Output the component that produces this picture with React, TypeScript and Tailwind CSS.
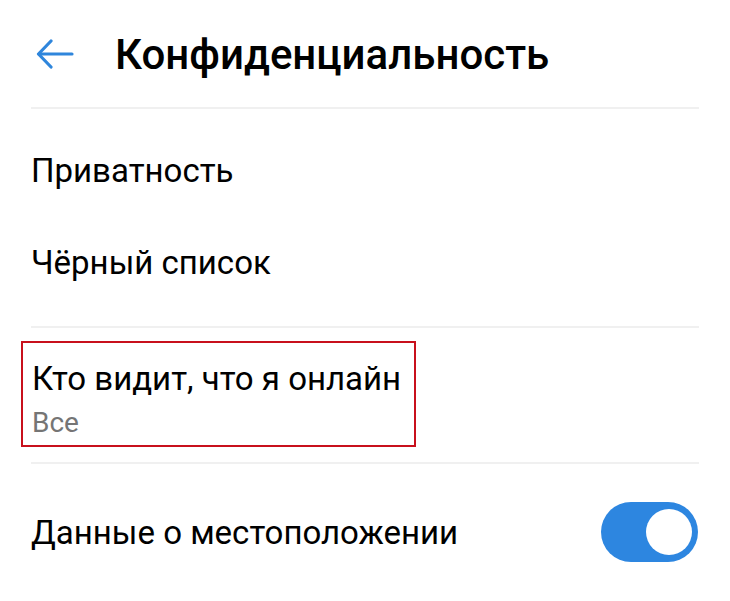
import React from "react";

export default function App() {
  return (
    <div className="w-[730px] h-[601px] bg-white overflow-hidden font-['Roboto',sans-serif] text-black">
      <div className="flex items-center h-[107px] pl-[36px]">
        <svg width="38" height="30" viewBox="0 0 38 30" fill="none" stroke="#2f86dc" strokeWidth="3.2" strokeLinecap="round" strokeLinejoin="round" className="mt-[1px]">
          <path d="M36 15H3" />
          <path d="M15 2L2.5 15L15 28" />
        </svg>
        <h1 className="ml-[41px] text-[42px] font-medium leading-none mt-[3px]">Конфиденциальность</h1>
      </div>
      <div className="mx-[31px] h-[2px] bg-[#f0f0f0]" />
      <div className="flex flex-col pl-[31px] pt-[15px] pb-[18px]">
        <div className="h-[92px] flex items-center text-[33px] leading-none">Приватность</div>
        <div className="h-[92px] flex items-center text-[33px] leading-none">Чёрный список</div>
      </div>
      <div className="mx-[31px] h-[2px] bg-[#f0f0f0]" />
      <div className="pl-[21px] pt-[13px] pb-[15px]">
        <div className="w-[395px] h-[106px] border-2 border-[#c8101c] pl-[9px] pt-[19px]">
          <div className="text-[33px] leading-[34px]">Кто видит, что я онлайн</div>
          <div className="text-[28px] leading-[34px] mt-[10px] text-[#757575]">Все</div>
        </div>
      </div>
      <div className="mx-[31px] h-[2px] bg-[#f0f0f0]" />
      <div className="flex items-center justify-between pl-[31px] pr-[32px] h-[136px]">
        <div className="text-[33px] leading-none">Данные о местоположении</div>
        <div className="w-[97px] h-[60px] rounded-full bg-[#2d86e0] flex items-center justify-end pr-[6px]">
          <div className="w-[46px] h-[46px] rounded-full bg-white" />
        </div>
      </div>
    </div>
  );
}
